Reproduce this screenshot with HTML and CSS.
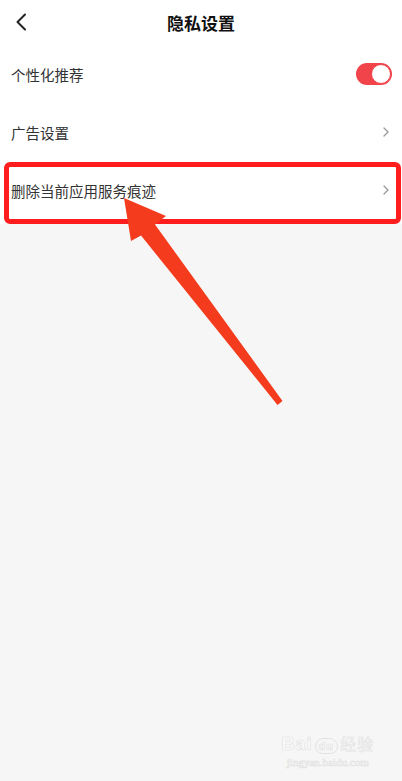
FILE: index.html
```html
<!DOCTYPE html>
<html lang="zh-CN">
<head>
    <meta charset="UTF-8">
    <meta name="viewport" content="width=device-width, initial-scale=1.0">
    <title>隐私设置</title>
    <link rel="stylesheet" href="styles.css">
</head>
<body>

    <div class="page">
        <header class="nav">
            <span class="back">
                <svg width="12" height="18" viewBox="0 0 12 18"><polyline points="10,1.5 2.5,9 10,16.5" fill="none" stroke="#222" stroke-width="2" stroke-linecap="round" stroke-linejoin="round"/></svg>
            </span>
            <h1>隐私设置</h1>
        </header>

        <ul class="list">
            <li class="row">
                <span>个性化推荐</span>
                <span class="switch on"><span class="knob"></span></span>
            </li>
            <li class="row">
                <span>广告设置</span>
                <svg class="more" width="6" height="10" viewBox="0 0 6 10"><polyline points="1,1 5,5 1,9" fill="none" stroke="#9a9a9a" stroke-width="1.3" stroke-linecap="round" stroke-linejoin="round"/></svg>
            </li>
            <li class="row">
                <span>删除当前应用服务痕迹</span>
                <svg class="more" width="6" height="10" viewBox="0 0 6 10"><polyline points="1,1 5,5 1,9" fill="none" stroke="#9a9a9a" stroke-width="1.3" stroke-linecap="round" stroke-linejoin="round"/></svg>
            </li>
        </ul>

        <!-- annotation: red frame + arrow -->
        <div class="hl-box"></div>
        <svg class="arrow" width="402" height="781" viewBox="0 0 402 781">
            <polygon points="124,198 166,216 155,224.5 282.5,401 277.5,405 141,235.5 131,241" fill="#f53b1d"/>
        </svg>

        <div class="mark">
            <div class="mark-logo">Bai<span class="paw">du</span><span class="cn">经验</span></div>
            <div class="mark-url">jingyan.baidu.com</div>
        </div>
    </div>

</body>
</html>
```

FILE: styles.css
```css
body {
    margin: 0;
    background: #f6f6f6;
    font-family: "Noto Sans CJK SC", "Noto Sans", sans-serif;
    color: #333;
}
.page {
    position: relative;
    width: 402px;
    height: 781px;
    overflow: hidden;
}
/* top bar */
.nav {
    height: 45px;
    background: white;
    display: flex;
    align-items: center;
    justify-content: center;
    position: relative;
}
.nav h1 {
    margin: 0;
    font-size: 17px;
    font-weight: bold;
    color: #111;
}
.back {
    position: absolute;
    left: 15px;
    top: 13px;
    display: flex;
}
/* settings list */
.list {
    list-style: none;
    margin: 0;
    padding: 0 0 5px;
    background: white;
}
.row {
    height: 58px;
    display: flex;
    align-items: center;
    justify-content: space-between;
    padding: 0 13px 0 11px;
    font-size: 14.5px;
    color: #333;
}
.switch {
    width: 36px;
    height: 22px;
    border-radius: 11px;
    background: #f0434a;
    display: flex;
    align-items: center;
    justify-content: flex-end;
    margin-right: -3px;
    box-sizing: border-box;
    padding: 1px;
}
.knob {
    width: 20px;
    height: 20px;
    border-radius: 50%;
    background: white;
    box-sizing: border-box;
    border: 1px solid #f0434a;
}
/* annotation */
.hl-box {
    position: absolute;
    left: 4px;
    top: 162px;
    width: 397px;
    height: 62px;
    box-sizing: border-box;
    border: 5px solid #ff1d1d;
    border-radius: 6px;
}
.arrow {
    position: absolute;
    left: 0;
    top: 0;
}
/* watermark */
.mark {
    position: absolute;
    right: 28px;
    bottom: 12px;
    text-align: center;
    color: #fcfcfc;
    -webkit-text-stroke: 0.6px #e2e2e2;
}
.mark-logo {
    font-family: "Liberation Sans", sans-serif;
    font-size: 18px;
    font-weight: bold;
    line-height: 22px;
    letter-spacing: 1px;
}
.mark-logo .cn {
    font-family: "Noto Sans CJK SC", sans-serif;
    font-weight: normal;
    font-size: 16px;
}
.paw {
    font-size: 11px;
    display: inline-block;
    border: 1px solid #e2e2e2;
    border-radius: 9px 9px 8px 8px;
    padding: 0 3px;
    margin: 0 2px;
    line-height: 14px;
}
.mark-url {
    font-family: "Liberation Serif", serif;
    font-size: 11px;
    line-height: 14px;
}
```
